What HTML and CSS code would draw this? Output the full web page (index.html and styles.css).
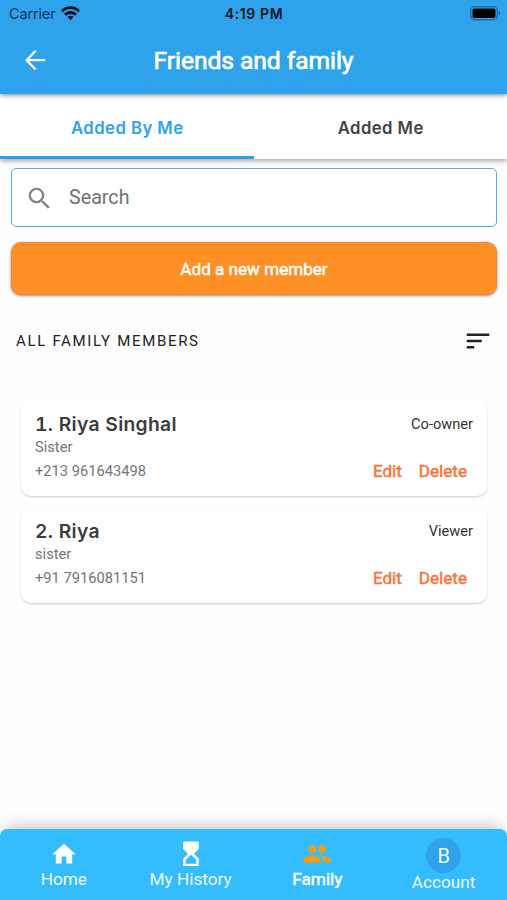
FILE: index.html
```html
<!DOCTYPE html>
<html lang="en">
<head>
<meta charset="utf-8">
<title>Friends and family</title>
<link rel="stylesheet" href="styles.css">
</head>
<body>
<div class="app">
  <header class="top">
    <div class="status">
      <div class="carrier"><span>Carrier</span>
        <svg width="19" height="14" viewBox="0 0 19 14" fill="none" stroke="#06121c" stroke-width="2.9"><path d="M1 5.200a12 12 0 0 1 17 0M4 8.800a7.800 7.800 0 0 1 11 0"/><path d="M9.500 13.900 6.500 11.100a4.200 4.200 0 0 1 6 0z" fill="#06121c" stroke="none"/></svg>
      </div>
      <div class="clock">4:19 PM</div>
      <svg class="battery" width="31" height="15" viewBox="0 0 31 15"><rect x=".75" y=".75" width="26.500" height="13" rx="3.500" fill="none" stroke="#1c6da5" stroke-width="1.300"/><rect x="2.500" y="2.500" width="23" height="9.600" rx="1.800" fill="#000"/><path d="M28.600 5v4.600q1.600-.8 1.600-2.300T28.600 5z" fill="#1c6da5"/></svg>
    </div>
    <div class="bar">
      <svg class="back" width="22" height="22" viewBox="0 0 22 22" fill="none" stroke="#fff" stroke-width="2.300" stroke-linecap="round" stroke-linejoin="round"><path d="M11 1.500 2.500 10.200l8.500 8.600M2.800 10.200h17.500"/></svg>
      <h1>Friends and family</h1>
    </div>
  </header>
  <nav class="tabs">
    <div class="tab active"><span>Added By Me</span></div>
    <div class="tab"><span>Added Me</span></div>
  </nav>
  <main>
    <div class="search">
      <svg width="29" height="29" viewBox="0 0 24 24" fill="#868686"><path d="M15.500 14h-.79l-.28-.27A6.470 6.470 0 0 0 16 9.500 6.500 6.500 0 1 0 9.500 16c1.610 0 3.090-.59 4.230-1.570l.27.28v.79l5 4.990L20.490 19l-4.990-5zm-6 0C7.010 14 5 11.990 5 9.500S7.010 5 9.500 5 14 7.010 14 9.500 11.990 14 9.500 14z"/></svg>
      <span>Search</span>
    </div>
    <div class="add"><span>Add a new member</span></div>
    <div class="heading">
      <h2>ALL FAMILY MEMBERS</h2>
      <svg width="30" height="30" viewBox="0 0 24 24" fill="#222"><path d="M3 18h6v-2H3v2zM3 6v2h18V6H3zm0 7h12v-2H3v2z"/></svg>
    </div>
    <section class="cards">
      <article class="card">
        <div class="row name"><h3>1. Riya Singhal</h3><span class="role">Co-owner</span></div>
        <div class="relation">Sister</div>
        <div class="row"><span class="phone">+213 961643498</span><span class="actions"><b>Edit</b><b>Delete</b></span></div>
      </article>
      <article class="card">
        <div class="row name"><h3>2. Riya</h3><span class="role">Viewer</span></div>
        <div class="relation">sister</div>
        <div class="row"><span class="phone">+91 7916081151</span><span class="actions"><b>Edit</b><b>Delete</b></span></div>
      </article>
    </section>
  </main>
  <footer class="bottom">
    <div class="item">
      <svg width="28" height="28" viewBox="0 0 24 24" fill="#fff"><path d="M10 21v-6h4v6h5v-8h3L12 4 2 13h3v8z"/></svg>
      <span>Home</span>
    </div>
    <div class="item">
      <svg width="28" height="28" viewBox="0 0 28 28"><path fill="#fff" fill-rule="evenodd" d="M6.200 2.500h15.600v7.500L17 14.800l4.800 4.900v7.400H6.200v-7.400L11 14.800 6.200 10zM14 15.800l-5.300 5v3.900h10.600v-3.900z"/></svg>
      <span>My History</span>
    </div>
    <div class="item selected">
      <svg width="28" height="28" viewBox="0 0 28 28" fill="#f79a12"><circle cx="9.300" cy="10" r="3.800"/><circle cx="19" cy="10" r="3.800"/><path d="M.2 23.500v-2.300c0-3 5.500-4.700 9-4.700s8.800 1.700 8.800 4.700v2.300zM20.200 23.500v-2.300c0-2-.8-3.400-2.200-4.500 4 .1 9.700 1.600 9.700 4.500v2.300z"/></svg>
      <span>Family</span>
    </div>
    <div class="item account">
      <div class="avatar">B</div>
      <span>Account</span>
    </div>
  </footer>
</div>
</body>
</html>
```
FILE: styles.css
```css
* { box-sizing: border-box; }
body { margin: 0; font-family: Roboto, "Liberation Sans", sans-serif; background: #fefefe; }
h1, h2, h3 { margin: 0; font-weight: 400; }
svg { display: block; flex: none; }
.app { width: 507px; height: 900px; display: flex; flex-direction: column; overflow: hidden; }
.top { height: 94px; flex: none; background: #2fa2ec; box-shadow: 0 1px 5px rgba(0,0,0,.5); z-index: 2; }
.status { height: 27px; padding: 0 8px 0 9px; display: grid; grid-template-columns: 1fr auto 1fr; align-items: center; font-family: Inter, sans-serif; color: #06121c; }
.carrier { display: flex; align-items: center; gap: 6px; font-size: 14.500px; letter-spacing: -.15px; color: #123654; }
.carrier svg { margin-top: -2px; }
.clock { font-size: 14px; font-weight: 600; letter-spacing: .6px; }
.battery { justify-self: end; margin-right: -2px; }
.bar { height: 67px; display: grid; grid-template-columns: 60px 1fr 60px; align-items: center; }
.back { margin-left: 24px; }
h1 { text-align: center; color: #fff; font-size: 24.700px; -webkit-text-stroke: .7px #fff; letter-spacing: -.1px; }
.tabs { height: 65px; flex: none; display: grid; grid-template-columns: 1fr 1fr; background: #fff; box-shadow: 0 2px 5px rgba(0,0,0,.35); z-index: 1; }
.tab { display: flex; align-items: center; justify-content: center; padding: 5px 0 0 1px; border-bottom: 3px solid transparent; font: 600 16.700px Inter, sans-serif; letter-spacing: .45px; color: #444; }
.tab.active { color: #2fa2ec; border-color: #2f9ee6; }
main { flex: 1; padding: 9px 10px 0 11px; }
.search { height: 59px; border: 1.500px solid #53aee8; border-radius: 5px; background: #fff; padding: 0 13px 1px; display: flex; align-items: center; gap: 15px; font-size: 19.700px; color: #707070; }
.search svg { margin-top: 2px; }
.add { height: 53px; margin-top: 15px; border-radius: 10px; background: #ff9026; border: 1px solid #f88437; box-shadow: 0 1px 3px rgba(0,0,0,.45); display: flex; align-items: center; justify-content: center; color: #fff; font-size: 17.100px; -webkit-text-stroke: .5px #fff; }
.heading { height: 30px; margin-top: 31px; padding: 0 4px 0 5px; display: flex; align-items: center; justify-content: space-between; color: #222; }
h2 { font-size: 15px; letter-spacing: 1.680px; }
.cards { margin: 44px 10px 0; display: flex; flex-direction: column; gap: 11px; }
.card { height: 96px; padding: 11px 14px 0 14px; border-radius: 10px; background: #fff; box-shadow: 0 1px 2px rgba(0,0,0,.2); clip-path: inset(4px -4px -5px -4px); }
.row { height: 24px; display: flex; justify-content: space-between; align-items: center; }
.row.name { height: 25px; }
h3 { font: 600 19.300px Inter, sans-serif; font-variant-numeric: tabular-nums; letter-spacing: .3px; color: #3c3c3c; }
.role { font-size: 14.600px; color: #333; }
.relation { height: 23px; line-height: 23px; font-size: 14.700px; color: #757575; }
.phone { font-size: 14.700px; color: #757575; }
.actions { display: flex; gap: 17px; padding-right: 6px; }
.actions b { font-weight: 400; font-size: 17.100px; color: #fa7440; -webkit-text-stroke: .5px #fa7440; }
.bottom { height: 71px; flex: none; background: #33bdff; border-radius: 7px 7px 0 0; box-shadow: 0 -10px 14px -6px rgba(0,0,0,.2); display: grid; grid-template-columns: repeat(4, 1fr); }
.item { display: flex; flex-direction: column; align-items: center; padding: 10px 0 0 1px; color: #f1faff; font-size: 17.200px; line-height: 22px; }
.item span { margin-top: 1px; }
.selected { color: #fff; -webkit-text-stroke: .5px #fff; }
.selected svg { stroke: none; }
.account { padding: 9px 0 0; }
.avatar { width: 35px; height: 35px; border-radius: 50%; background: #2fa2ec; display: flex; align-items: center; justify-content: center; font-size: 20px; }
.account span { margin-top: -2px; }
```
